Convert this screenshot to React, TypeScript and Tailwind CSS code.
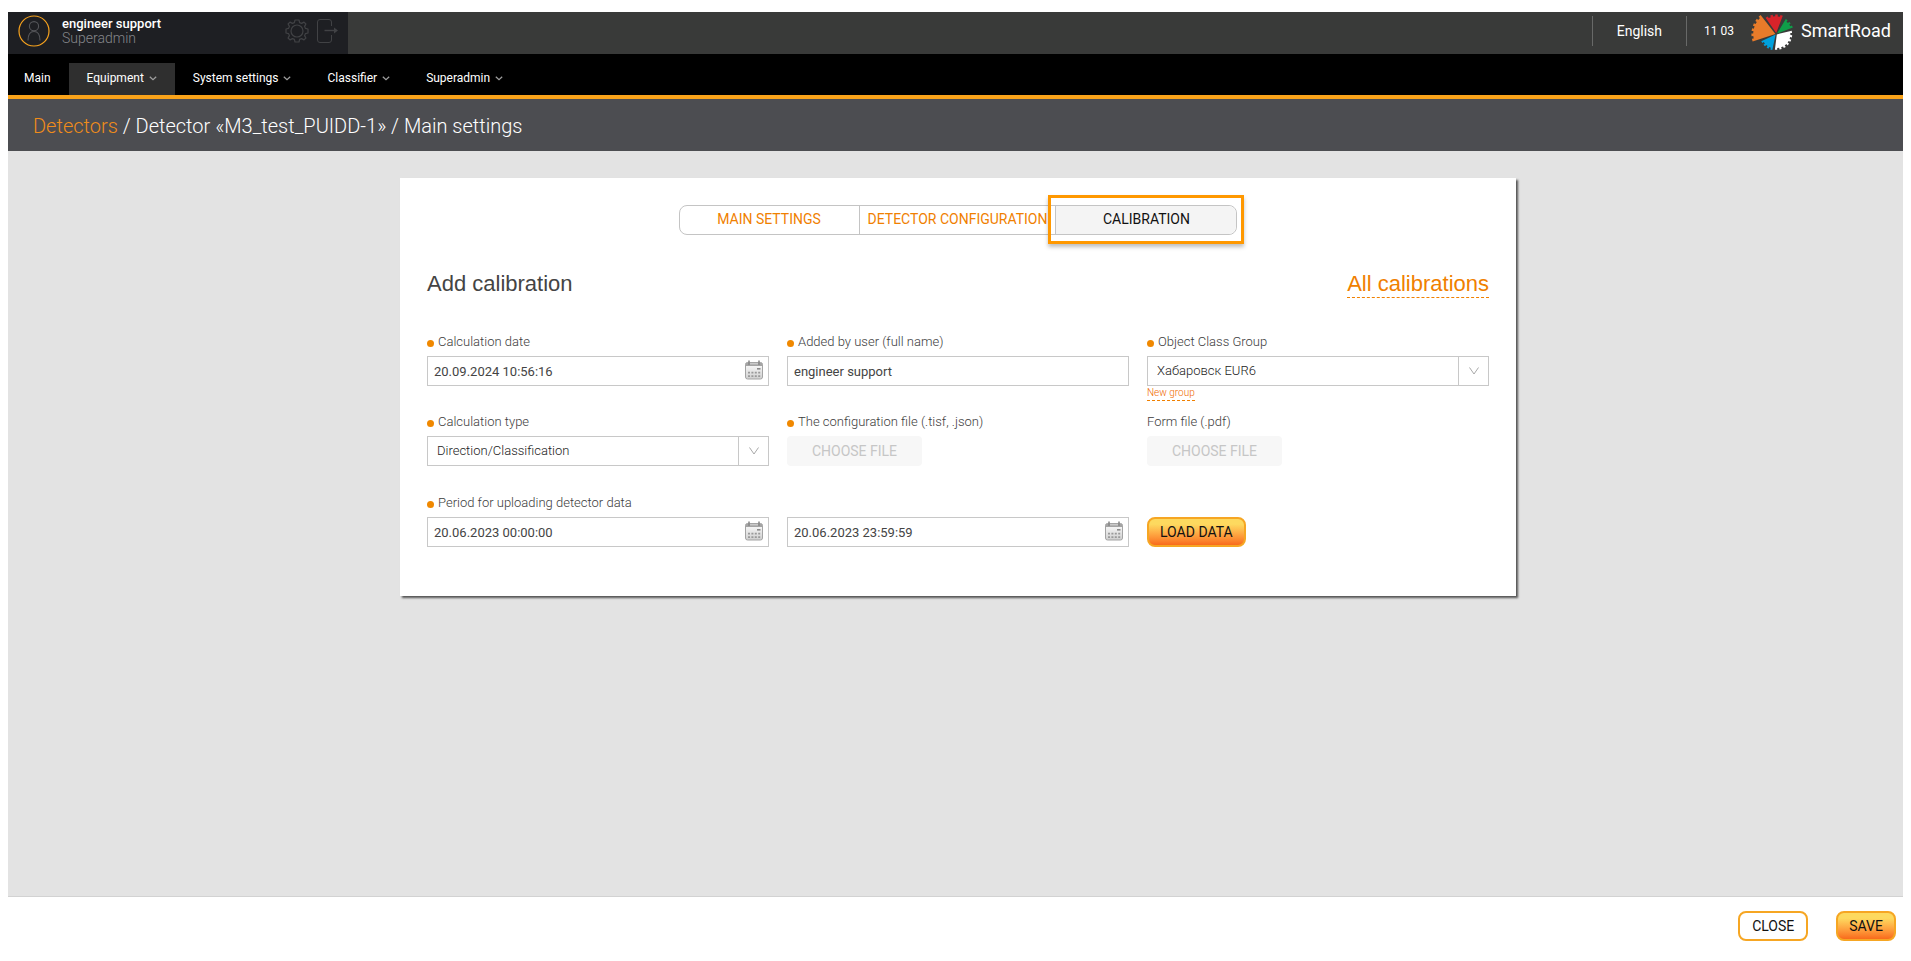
import { useState } from 'react';
import type { ReactNode } from 'react';

const NAV: { label: string; active: boolean }[] = [
  { label: 'Equipment', active: true },
  { label: 'System settings', active: false },
  { label: 'Classifier', active: false },
  { label: 'Superadmin', active: false },
];

// Outline of one gear sector around (cx, cy), angles in degrees, clockwise from east
function gearSector(cx: number, cy: number, from: number, to: number, r: number, teeth: number) {
  const depth = 1.8;
  const steps = teeth * 2 - 1;
  const at = (deg: number, rad: number) => {
    const a = (deg * Math.PI) / 180;
    return `${(cx + rad * Math.cos(a)).toFixed(1)} ${(cy + rad * Math.sin(a)).toFixed(1)}`;
  };
  const points = [`${cx} ${cy}`];
  for (let i = 0; i < steps; i++) {
    const rad = i % 2 === 0 ? r : r - depth;
    points.push(at(from + ((to - from) * i) / steps, rad));
    points.push(at(from + ((to - from) * (i + 1)) / steps, rad));
  }
  return `M${points.join(' L')} Z`;
}

function Logo() {
  return (
    <svg viewBox="0 0 42 38" className="w-[42px] h-[38px]" aria-hidden="true">
      <path d={gearSector(24.4, 22, 162, 232, 24, 6)} fill="#e87b2a" />
      <path d={gearSector(25.2, 21, 235, 291, 18.5, 4)} fill="#d8232a" />
      <path d={gearSector(26, 21.6, 301, 339, 17, 3)} fill="#0f9d49" />
      <path d={gearSector(25.8, 22.4, -14, 97, 15.4, 7)} fill="#ffffff" />
      <path d={gearSector(24.6, 22.6, 102, 155, 15.8, 4)} fill="#00a0dc" />
    </svg>
  );
}

function AvatarIcon() {
  return (
    <svg viewBox="0 0 32 32" fill="none" className="w-8 h-8" aria-hidden="true">
      <circle cx="16" cy="16" r="15" stroke="#f6a21e" strokeWidth="1.2" />
      <circle cx="16" cy="11.2" r="4.6" stroke="#55565a" strokeWidth="1.1" />
      <path d="M10 25.5 C10 19 12.5 16.5 16 16.5 C19.5 16.5 22 19 22 25.5" stroke="#55565a" strokeWidth="1.1" />
    </svg>
  );
}

function GearIcon() {
  return (
    <svg viewBox="0 0 24 24" fill="none" stroke="#414245" strokeWidth="1.2" strokeLinejoin="round" className="w-6 h-6">
      <circle cx="12" cy="12" r="6" />
      <path d="M10 1 H14 L14.6 3.6 L16.6 4.4 L19 3.1 L20.9 5 L19.6 7.4 L20.4 9.4 L23 10 V14 L20.4 14.6 L19.6 16.6 L20.9 19 L19 20.9 L16.6 19.6 L14.6 20.4 L14 23 H10 L9.4 20.4 L7.4 19.6 L5 20.9 L3.1 19 L4.4 16.6 L3.6 14.6 L1 14 V10 L3.6 9.4 L4.4 7.4 L3.1 5 L5 3.1 L7.4 4.4 L9.4 3.6 Z" />
    </svg>
  );
}

function ExitIcon() {
  return (
    <svg viewBox="0 0 22 24" fill="none" stroke="#414245" className="w-[22px] h-6">
      <path d="M14.5 7 V3 Q14.5 0.5 12 0.5 H3 Q0.5 0.5 0.5 3 V21 Q0.5 23.5 3 23.5 H12 Q14.5 23.5 14.5 21 V16" />
      <path d="M7.5 11.5 H19" strokeWidth="1.4" />
      <path d="M17 8.5 L21 11.5 L17 14.5 Z" fill="#414245" stroke="none" />
    </svg>
  );
}

function CalendarIcon() {
  return (
    <svg viewBox="0 0 18 20" className="w-[18px] h-5" aria-hidden="true">
      <defs>
        <linearGradient id="calendar-page" x1="0" y1="0" x2="0" y2="1">
          <stop offset="0%" stopColor="#ffffff" />
          <stop offset="100%" stopColor="#cfcfcf" />
        </linearGradient>
      </defs>
      <rect x="0.5" y="2.5" width="17" height="16.5" rx="2" fill="url(#calendar-page)" stroke="#a4a4a4" />
      <path d="M0.5 6 V4.5 Q0.5 2.5 2.5 2.5 H15.5 Q17.5 2.5 17.5 4.5 V6 Z" fill="#a4a4a4" />
      <path d="M4 0.5 V5 M14 0.5 V5" stroke="#8a8a8a" strokeWidth="1.6" />
      <path d="M5 3.8 H13" stroke="#d9d9d9" />
      <rect x="12" y="8" width="3.5" height="1.6" fill="#8a8a8a" />
      <path d="M3 12.7 H15.5 M3 16.2 H15.5" stroke="#9a9a9a" strokeWidth="1.8" strokeDasharray="2 1.4" />
    </svg>
  );
}

function Label({ htmlFor, required = false, children }: { htmlFor: string; required?: boolean; children: ReactNode }) {
  return (
    <label htmlFor={htmlFor} className="flex items-center h-5 mb-1 text-[13px] font-light text-[#3c3c3c]">
      {required && <span className="w-[7px] h-[7px] mt-0.5 mr-1 rounded-full bg-[#f08800]" />}
      {children}
    </label>
  );
}

function DateInput({ id, value, label }: { id: string; value: string; label?: string }) {
  return (
    <div className="relative">
      <input
        id={id}
        aria-label={label}
        defaultValue={value}
        className="w-full h-[30px] pl-1.5 pr-9 border border-[#c8c8c8] text-[13px] text-[#444444] outline-none"
      />
      <button type="button" aria-label="Open calendar" className="absolute right-1.5 top-1">
        <CalendarIcon />
      </button>
    </div>
  );
}

function Select({ id, value }: { id: string; value: string }) {
  return (
    <div className="relative">
      <select
        id={id}
        className="w-full h-[30px] pl-[9px] pr-9 border border-[#c8c8c8] bg-white text-[13px] font-light text-[#222222] appearance-none outline-none"
      >
        <option>{value}</option>
      </select>
      <span className="absolute right-0 inset-y-0 w-[31px] flex items-center justify-center border border-[#c8c8c8] pointer-events-none">
        <svg viewBox="0 0 12 8" fill="none" stroke="#a8a8a8" className="w-3 h-2">
          <path d="M1.5 0.5 L6 7 L10.5 0.5" />
        </svg>
      </span>
    </div>
  );
}

function FileButton({ id }: { id: string }) {
  return (
    <button id={id} type="button" disabled className="w-[135px] h-[30px] rounded-sm bg-[#f7f7f7] text-sm text-[#c6c6c6]">
      CHOOSE FILE
    </button>
  );
}

const PRIMARY =
  'h-[30px] px-[11px] rounded-lg border-2 border-[#f6a623] bg-linear-to-b from-[#fdd95f] from-20% to-[#f86a1c] text-sm text-[#111111]';

export default function App() {
  const [tab, setTab] = useState('CALIBRATION');

  return (
    <div className="min-h-screen flex flex-col pt-3 px-2 bg-white font-[Roboto,sans-serif] text-[#3c3c3c]">
      {/* Top bar */}
      <header className="flex h-[42px] bg-[#393a39] text-white">
        <div className="flex items-center w-[340px] pb-1 pl-2.5 pr-[9px] bg-[#1e1f23]">
          <AvatarIcon />
          <div className="flex-1 ml-3 leading-[15px]">
            <div className="text-[13px] font-medium">engineer support</div>
            <div className="text-sm leading-[15px] font-light text-[#85868a]">Superadmin</div>
          </div>
          <button type="button" aria-label="Settings">
            <GearIcon />
          </button>
          <button type="button" aria-label="Log out" className="ml-2">
            <ExitIcon />
          </button>
        </div>
        <div className="flex items-center ml-auto pb-1 pr-3">
          <button type="button" className="h-[30px] px-6 border-x border-[#686968] text-sm">
            English
          </button>
          <span className="mx-[17px] text-xs">11 03</span>
          <Logo />
          <span className="ml-2 text-lg">SmartRoad</span>
        </div>
      </header>

      {/* Main menu */}
      <nav className="flex h-[45px] items-end border-b-4 border-[#f9a31a] bg-black text-xs text-white">
        <a href="#main" className="flex items-center h-8 pb-0.5 pl-4 pr-[18px]">
          Main
        </a>
        {NAV.map(item => (
          <a
            key={item.label}
            href="#menu"
            className={`flex items-center h-8 pb-0.5 px-[18px] ${item.active ? 'bg-[#2f2f2f]' : ''}`}
          >
            {item.label}
            <svg viewBox="0 0 8 5" fill="none" stroke="#a0a0a0" strokeWidth="1.2" className="w-2 h-[5px] ml-[5px]">
              <path d="M0.8 0.8 L4 3.8 L7.2 0.8" />
            </svg>
          </a>
        ))}
      </nav>

      <h1 className="h-[52px] pl-[25px] bg-[#4c4d51] text-xl leading-[54px] font-light text-white">
        <a href="#detectors" className="text-[#f08c1a]">
          Detectors
        </a>{' '}
        / Detector «M3_test_PUIDD-1» / Main settings
      </h1>

      <main className="flex-1 pt-[27px] pl-[5px] bg-[#e3e3e3] border-b border-[#d2d2d2]">
        <section className="w-full max-w-[1116px] mx-auto px-[27px] pt-[27px] pb-[49px] bg-white shadow-[2px_2px_2px_0_#555555]">
          <div className="flex justify-center">
            <div className="flex h-[30px] border border-[#c4c4c4] rounded-lg text-sm">
              {['MAIN SETTINGS', 'DETECTOR CONFIGURATION', 'CALIBRATION'].map(name => (
                <button
                  key={name}
                  type="button"
                  onClick={() => setTab(name)}
                  className={`relative min-w-[180px] px-2 pb-0.5 border-[#c4c4c4] not-last:border-r last:rounded-r-lg ${
                    tab === name ? 'bg-[#f4f4f4] text-[#111111]' : 'text-[#f08000]'
                  }`}
                >
                  {name}
                  {tab === name && (
                    <span className="absolute -inset-x-2 -top-[11px] -bottom-[10px] z-10 border-3 border-[#ff9800] shadow-[0_3px_4px_#00000040]" />
                  )}
                </button>
              ))}
            </div>
          </div>

          <div className="flex justify-between mt-[35px] font-['Liberation_Sans',Arial,sans-serif] text-[22px] leading-7">
            <h2 className="text-[#444444]">Add calibration</h2>
            <a href="#calibrations" className="h-7 border-b border-dashed border-[#f08000] text-[#f08000]">
              All calibrations
            </a>
          </div>

          <form className="mt-[34px]" onSubmit={e => e.preventDefault()}>
            <div className="grid grid-cols-3 gap-x-[18px]">
              <div className="h-20">
                <Label htmlFor="calc-date" required>
                  Calculation date
                </Label>
                <DateInput id="calc-date" value="20.09.2024 10:56:16" />
              </div>
              <div>
                <Label htmlFor="added-by" required>
                  Added by user (full name)
                </Label>
                <input
                  id="added-by"
                  defaultValue="engineer support"
                  className="w-full h-[30px] px-1.5 border border-[#c8c8c8] text-[13px] text-[#444444] outline-none"
                />
              </div>
              <div>
                <Label htmlFor="class-group" required>
                  Object Class Group
                </Label>
                <Select id="class-group" value="Хабаровск EUR6" />
                <a
                  href="#new-group"
                  className="block w-fit border-b border-dashed border-[#f08000] text-[10px] leading-[14px] font-light text-[#f06a00]"
                >
                  New group
                </a>
              </div>
              <div className="h-[81px]">
                <Label htmlFor="calc-type" required>
                  Calculation type
                </Label>
                <Select id="calc-type" value="Direction/Classification" />
              </div>
              <div>
                <Label htmlFor="config-file" required>
                  The configuration file (.tisf, .json)
                </Label>
                <FileButton id="config-file" />
              </div>
              <div>
                <Label htmlFor="form-file">Form file (.pdf)</Label>
                <FileButton id="form-file" />
              </div>
            </div>
            <div className="grid grid-cols-3 items-end gap-x-[18px]">
              <div>
                <Label htmlFor="period-from" required>
                  Period for uploading detector data
                </Label>
                <DateInput id="period-from" value="20.06.2023 00:00:00" />
              </div>
              <DateInput id="period-to" value="20.06.2023 23:59:59" label="Period end" />
              <div>
                <button type="button" className={PRIMARY}>
                  LOAD DATA
                </button>
              </div>
            </div>
          </form>
        </section>
      </main>

      <footer className="flex justify-end gap-7 h-16 pt-3.5 pr-[7px]">
        <button type="button" className="h-[30px] px-3 rounded-lg border-2 border-[#f6a623] bg-white text-sm text-[#111111]">
          CLOSE
        </button>
        <button type="button" className={PRIMARY}>
          SAVE
        </button>
      </footer>
    </div>
  );
}
